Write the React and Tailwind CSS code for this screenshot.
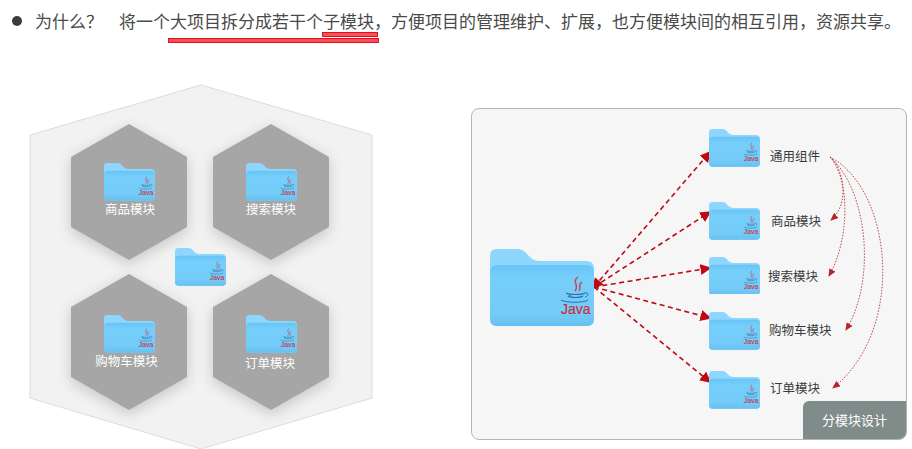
const FONT = "font-['Noto_Sans_CJK_SC','Noto_Sans',sans-serif]";

const HEX_NODES = [
  { name: '商品模块', labelClass: '-mt-px ml-[2px]' },
  { name: '搜索模块', labelClass: '-mt-px' },
  { name: '购物车模块', labelClass: '-mt-px -ml-[5px]' },
  { name: '订单模块', labelClass: 'mt-px -ml-[2px]' },
];

const MODULES = [
  { name: '通用组件', rowClass: '', labelClass: 'ml-[10px] mt-[18px]' },
  { name: '商品模块', rowClass: 'mt-[35px]', labelClass: 'ml-[11px] mt-[10px]' },
  { name: '搜索模块', rowClass: 'mt-[17px]', labelClass: 'ml-[8px] mt-[10px]' },
  { name: '购物车模块', rowClass: 'mt-[18px]', labelClass: 'ml-[9px] mt-[9px]' },
  { name: '订单模块', rowClass: 'mt-[21px]', labelClass: 'ml-[10px] mt-[8px]' },
];

// 文件夹图标，viewBox 按大图标 104x77 画
const JavaFolder = ({ className = '' }) => (
  <svg viewBox="0 0 104 77" className={`block shrink-0 ${className}`}>
    <defs>
      <linearGradient id="folderFront" x1="0" y1="0" x2="0" y2="1">
        <stop offset="0" stopColor="#66c4f6" />
        <stop offset="0.2" stopColor="#76cefb" />
        <stop offset="0.85" stopColor="#74cbf8" />
        <stop offset="1" stopColor="#66bff0" />
      </linearGradient>
    </defs>
    <path d="M7 0H27Q33 0 37 5L41 9Q44 12 50 12H96Q104 12 104 20V70Q104 77 97 77H7Q0 77 0 70V7Q0 0 7 0Z" fill="#8fd6fe" />
    <path d="M0 24Q0 16 8 16H96Q104 16 104 24V70Q104 77 97 77H7Q0 77 0 70Z" fill="url(#folderFront)" />
    <path d="M0 67H104M0 70H104" stroke="#5db8e8" strokeWidth="0.7" opacity="0.6" />
    <path d="M88 28C81 33 90 36 85 42M92 33C87 36 92 39 89 42" fill="none" stroke="#cf3d4a" strokeWidth="1.4" />
    <path d="M76 44C79 46 92 46 95 44M78 47C81 49 90 49 93 47M80 45.5V47" fill="none" stroke="#2f6ea8" strokeWidth="1.2" />
    <path d="M71 51C76 54 94 54 98 51M95 44C99 43 99 47 95 48" fill="none" stroke="#2f6ea8" strokeWidth="1" />
    <text x="71" y="65" fontSize="14" fontWeight="400" fill="#c8303c" stroke="#c8303c" strokeWidth="0.2" fontFamily="'Liberation Sans',sans-serif">Java</text>
  </svg>
);

const Hexagon = ({ points }) => (
  <polygon points={points} fill="#a6a6a6" className="drop-shadow-[0_4px_7px_rgba(0,0,0,0.18)]" />
);

const HexDiagram = () => (
  <div className="relative h-[405px] w-[471px] shrink-0">
    <svg width="471" height="405" className="absolute left-0 top-0">
      <polygon points="201,41 372,91 372,354 201,405 30,354 30,91" fill="#f2f2f2" stroke="#dcdcdc" />
      <Hexagon points="129,80 187,113 187,183 129,216 71,183 71,113" />
      <Hexagon points="271,80 329,113 329,183 271,216 213,183 213,113" />
      <Hexagon points="129,230 187,263 187,333 129,366 71,333 71,263" />
      <Hexagon points="271,230 329,263 329,333 271,366 213,333 213,263" />
    </svg>
    <div className="relative grid grid-cols-[142px_142px] grid-rows-[56px_56px] gap-y-[96px] pl-[58px] pt-[119px]">
      {HEX_NODES.map(({ name, labelClass }) => (
        <div key={name} className="flex flex-col items-center">
          <JavaFolder className="w-[51px]" />
          <span className={`text-[12.5px] leading-[18px] text-white ${labelClass}`}>{name}</span>
        </div>
      ))}
    </div>
    {/* 中间的父模块 */}
    <JavaFolder className="absolute left-[175px] top-[204px] w-[51px]" />
  </div>
);

const ModuleCard = () => (
  <div className="relative mt-[64px] flex h-[332px] w-[436px] items-start overflow-hidden rounded-lg border border-[#b5b5b5] bg-[#f6f6f6] pl-[18px] pt-[20px]">
    <svg width="434" height="330" className="absolute left-0 top-0">
      <defs>
        <marker id="solidHead" markerWidth="8" markerHeight="8" refX="6" refY="3.5" orient="auto">
          <path d="M0 0L7 3.5L0 7Z" fill="#c00812" />
        </marker>
        <marker id="solidTail" markerWidth="8" markerHeight="8" refX="2" refY="3.5" orient="auto">
          <path d="M7 0L0 3.5L7 7Z" fill="#c00812" />
        </marker>
        <marker id="thinHead" markerWidth="10" markerHeight="10" refX="7" refY="3.5" orient="auto" markerUnits="userSpaceOnUse">
          <path d="M0 0L8 3.5L0 7Z" fill="#b3262c" />
        </marker>
      </defs>
      <g fill="none" stroke="#c00812" strokeWidth="1.6" strokeDasharray="5 3.5">
        <path d="M122 178L238 43" markerEnd="url(#solidHead)" markerStart="url(#solidTail)" />
        <path d="M122 178L238 103" markerEnd="url(#solidHead)" />
        <path d="M122 178L238 159" markerEnd="url(#solidHead)" />
        <path d="M122 178L238 209" markerEnd="url(#solidHead)" />
        <path d="M122 178L238 273" markerEnd="url(#solidHead)" />
      </g>
      <g fill="none" stroke="#b3262c" strokeWidth="0.8" strokeDasharray="1.6 1.4">
        <path d="M358 48C372 60 378 95 359 111" markerEnd="url(#thinHead)" />
        <path d="M358 48C378 70 378 130 357 167" markerEnd="url(#thinHead)" />
        <path d="M358 48C395 80 405 170 374 221" markerEnd="url(#thinHead)" />
        <path d="M358 48C420 80 435 220 361 279" markerEnd="url(#thinHead)" />
      </g>
    </svg>
    <JavaFolder className="relative mt-[120px] w-[104px]" />
    <div className="relative ml-[115px] flex flex-col">
      {MODULES.map(({ name, rowClass, labelClass }) => (
        <div key={name} className={`flex items-start ${rowClass}`}>
          <JavaFolder className="w-[51px]" />
          <span className={`text-[12.5px] leading-[18px] text-[#3a3a3a] ${labelClass}`}>{name}</span>
        </div>
      ))}
    </div>
    <div className="absolute bottom-0 right-0 flex h-[38px] w-[103px] items-center justify-center rounded-tl-md bg-[#7f8c8a] text-[13px] text-white">
      分模块设计
    </div>
  </div>
);

export default function App() {
  return (
    <div className={`h-[449px] w-[912px] overflow-hidden bg-white ${FONT}`}>
      {/* 顶部说明 */}
      <div className="relative flex h-[44px] items-start pl-3 pt-[10px] text-[17px] leading-[22px] text-[#4a4a4a]">
        <span className="mr-[13px] mt-[6px] h-[10px] w-[10px] rounded-full bg-[#3c3c3c]" />
        <span className="w-[84px] shrink-0">为什么？</span>
        <span className="whitespace-nowrap">将一个大项目拆分成若干个子模块，方便项目的管理维护、扩展，也方便模块间的相互引用，资源共享。</span>
        <span className="absolute left-[322px] top-[32px] h-[5px] w-[56px] border border-[#e3101c] bg-[#f8505a]" />
        <span className="absolute left-[168px] top-[38px] h-[5px] w-[211px] border border-[#e3101c] bg-[#f8505a]" />
      </div>
      <div className="flex">
        <HexDiagram />
        <ModuleCard />
      </div>
    </div>
  );
}
